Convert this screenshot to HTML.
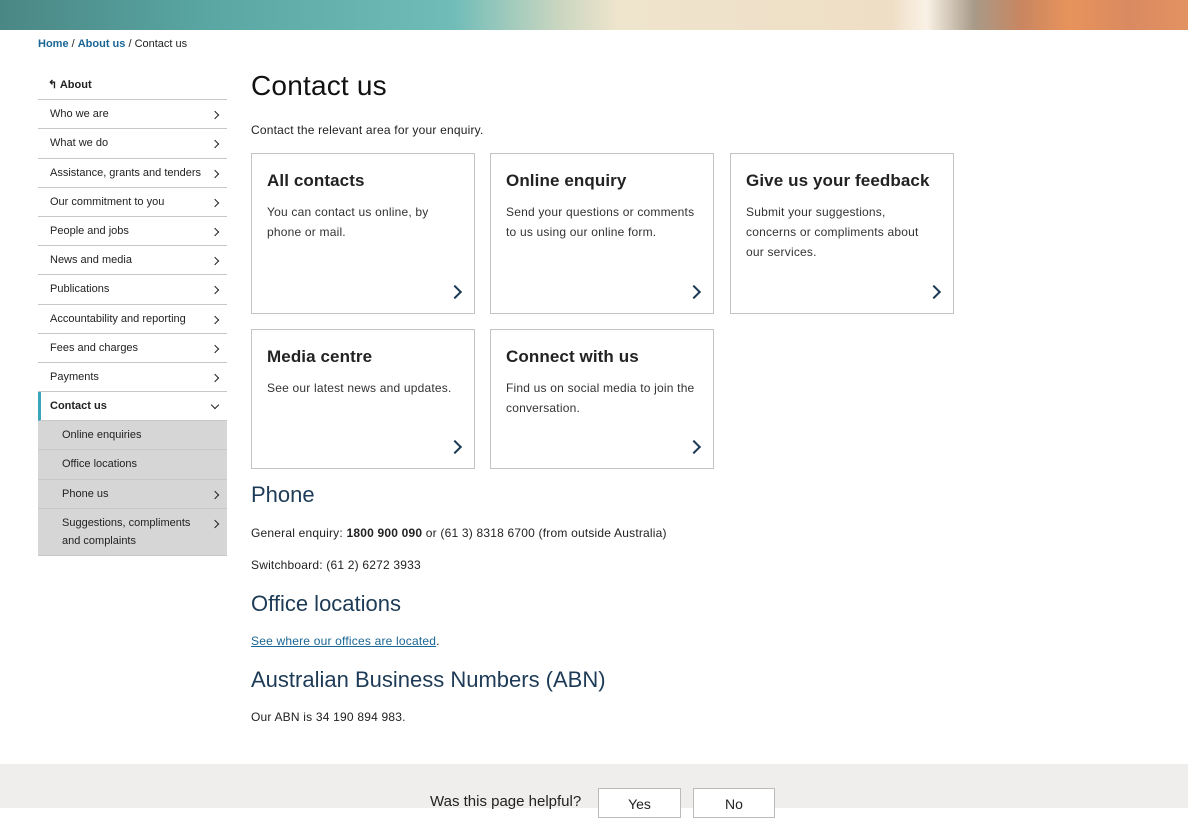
<!DOCTYPE html>
<html><head><meta charset="utf-8"><style>
*{margin:0;padding:0;box-sizing:border-box}
body{width:1188px;height:808px;overflow:hidden;background:#fff;font-family:"Liberation Sans",sans-serif;color:#222;position:relative}
.banner{position:absolute;left:0;top:0;width:1188px;height:30px;background:linear-gradient(90deg,#4a8784 0%,#5aa7a4 18%,#6fbcb8 38%,#c9d6c0 47%,#efe4cc 52%,#efdec6 75%,#faf2e6 78%,#a89a88 82%,#c98660 86%,#e8935c 90%,#d98a60 95%,#e39262 100%)}
.bc{position:absolute;left:38px;top:38px;font-size:11px;color:#222}
.bc b{color:#1a6694;font-weight:bold}
.side{position:absolute;left:38px;top:71px;width:189px}
.side div{position:relative;border-bottom:1px solid #c8c8c8;font-size:11px;height:29.2px;line-height:29px;padding-left:12px;color:#222}
.side .ch::after{content:"";position:absolute;right:9px;top:12px;width:5px;height:5px;border-right:1.6px solid #222;border-top:1.6px solid #222;transform:rotate(45deg)}
.side .about{font-weight:bold;padding-left:10px}
.side .act{font-weight:bold;border-left:3px solid #3aa6b9;padding-left:9px}
.side .act::after{content:"";position:absolute;right:9px;top:10px;width:5px;height:5px;border-right:1.6px solid #222;border-bottom:1.6px solid #222;transform:rotate(45deg)}
.side .sub{background:#d6d6d6;padding-left:24px}
h1{position:absolute;left:251px;top:70px;font-size:28px;font-weight:normal;color:#111;letter-spacing:0.2px}
.intro{position:absolute;left:251px;top:123px;font-size:12px;letter-spacing:0.2px}
.card{position:absolute;border:1px solid #c4c4c4;width:224px;padding:17px 15px}
.card h3{font-size:17px;font-weight:bold;color:#222;margin-bottom:11px;letter-spacing:0.1px}
.card p{font-size:12px;line-height:20px;color:#333;letter-spacing:0.2px}
.card::after{content:"";position:absolute;right:14px;bottom:16px;width:8px;height:8px;border-right:2.5px solid #1d3b56;border-top:2.5px solid #1d3b56;transform:rotate(45deg)}
h2{position:absolute;left:251px;font-size:22px;font-weight:normal;color:#1d3b56}
.t{position:absolute;left:251px;font-size:12px;color:#222;letter-spacing:0.2px}
a{color:#1a6694}
.foot{position:absolute;left:0;top:764px;width:1188px;height:44px;background:#efeeec}
.foot span{position:absolute;left:430px;top:29px;font-size:15px;color:#222}
.btn{position:absolute;top:24px;width:83px;height:30px;border:1px solid #bbb;background:#fff;text-align:center;font-size:14px;line-height:30px}
</style></head><body>
<div class="banner"></div>
<div class="bc"><b>Home</b> / <b>About us</b> / Contact us</div>
<div class="side">
<div class="about">&#8624; About</div>
<div class="ch">Who we are</div>
<div class="ch">What we do</div>
<div class="ch">Assistance, grants and tenders</div>
<div class="ch">Our commitment to you</div>
<div class="ch">People and jobs</div>
<div class="ch">News and media</div>
<div class="ch">Publications</div>
<div class="ch">Accountability and reporting</div>
<div class="ch">Fees and charges</div>
<div class="ch">Payments</div>
<div class="act">Contact us</div>
<div class="sub">Online enquiries</div>
<div class="sub">Office locations</div>
<div class="sub ch">Phone us</div>
<div class="sub ch" style="height:47px;line-height:18px;padding-top:5px">Suggestions, compliments<br>and complaints</div>
</div>
<h1>Contact us</h1>
<div class="intro">Contact the relevant area for your enquiry.</div>
<div class="card" style="left:251px;top:153px;height:161px"><h3>All contacts</h3><p>You can contact us online, by<br>phone or mail.</p></div>
<div class="card" style="left:490px;top:153px;height:161px"><h3>Online enquiry</h3><p style="white-space:nowrap">Send your questions or comments<br>to us using our online form.</p></div>
<div class="card" style="left:730px;top:153px;height:161px"><h3>Give us your feedback</h3><p>Submit your suggestions,<br>concerns or compliments about<br>our services.</p></div>
<div class="card" style="left:251px;top:329px;height:140px"><h3>Media centre</h3><p>See our latest news and updates.</p></div>
<div class="card" style="left:490px;top:329px;height:140px"><h3>Connect with us</h3><p style="white-space:nowrap">Find us on social media to join the<br>conversation.</p></div>
<h2 style="top:482px">Phone</h2>
<div class="t" style="top:526px">General enquiry: <b>1800 900 090</b> or (61 3) 8318 6700 (from outside Australia)</div>
<div class="t" style="top:558px">Switchboard: (61 2) 6272 3933</div>
<h2 style="top:591px">Office locations</h2>
<div class="t" style="top:634px"><a href="#">See where our offices are located</a>.</div>
<h2 style="top:667px">Australian Business Numbers (ABN)</h2>
<div class="t" style="top:710px">Our ABN is 34 190 894 983.</div>
<div class="foot"><span>Was this page helpful?</span><div class="btn" style="left:598px">Yes</div><div class="btn" style="left:693px;width:82px">No</div></div>
</body></html>
